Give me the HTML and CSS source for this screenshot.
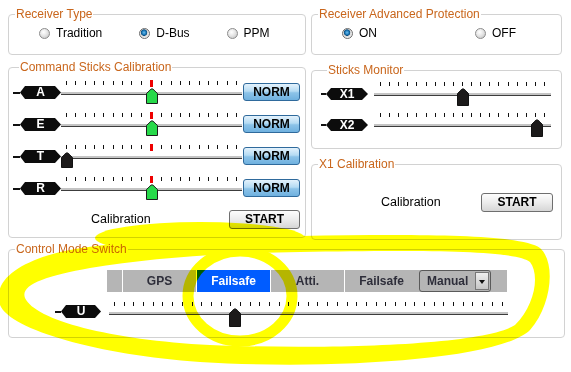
FILE: index.html
```html
<!DOCTYPE html>
<html lang="en">
<head>
  <meta charset="UTF-8">
  <title>Receiver Settings</title>
  <link rel="stylesheet" href="styles.css">
</head>
<body>
<div class="page">
  <div class="row">
    <fieldset class="panel wide top">
      <legend>Receiver Type</legend>
      <div class="radios">
        <label class="radio"><span class="dot"></span>Tradition</label>
        <label class="radio"><span class="dot on"></span>D-Bus</label>
        <label class="radio"><span class="dot"></span>PPM</label>
      </div>
    </fieldset>
    <fieldset class="panel narrow top">
      <legend>Receiver Advanced Protection</legend>
      <div class="radios">
        <label class="radio gap-on"><span class="dot on"></span>ON</label>
        <label class="radio"><span class="dot"></span>OFF</label>
      </div>
    </fieldset>
  </div>

  <div class="row second">
    <fieldset class="panel wide sticks">
      <legend>Command Sticks Calibration</legend>
      <div class="stick">
        <div class="tag"><span class="wire"></span><span class="pill">A</span></div>
        <div class="slider">
          <div class="ticks"><i></i><i></i><i></i><i></i><i></i><i></i><i></i><i></i><i></i><i class="mid"></i><i></i><i></i><i></i><i></i><i></i><i></i><i></i><i></i><i></i></div>
          <div class="track"></div>
          <svg class="thumb" style="left:85px" width="12" height="16" viewBox="0 0 12 16"><path d="M0.5 15.5V5.5L5 1.2Q6 0.5 7 1.2L11.5 5.5V15.5Z" fill="#27d94a" stroke="#1c1c1c"/></svg>
        </div>
        <button class="norm">NORM</button>
      </div>
      <div class="stick">
        <div class="tag"><span class="wire"></span><span class="pill">E</span></div>
        <div class="slider">
          <div class="ticks"><i></i><i></i><i></i><i></i><i></i><i></i><i></i><i></i><i></i><i class="mid"></i><i></i><i></i><i></i><i></i><i></i><i></i><i></i><i></i><i></i></div>
          <div class="track"></div>
          <svg class="thumb" style="left:85px" width="12" height="16" viewBox="0 0 12 16"><path d="M0.5 15.5V5.5L5 1.2Q6 0.5 7 1.2L11.5 5.5V15.5Z" fill="#27d94a" stroke="#1c1c1c"/></svg>
        </div>
        <button class="norm">NORM</button>
      </div>
      <div class="stick">
        <div class="tag"><span class="wire"></span><span class="pill">T</span></div>
        <div class="slider">
          <div class="ticks"><i></i><i></i><i></i><i></i><i></i><i></i><i></i><i></i><i></i><i class="mid"></i><i></i><i></i><i></i><i></i><i></i><i></i><i></i><i></i><i></i></div>
          <div class="track"></div>
          <svg class="thumb" style="left:0px" width="12" height="16" viewBox="0 0 12 16"><path d="M0.5 15.5V5.5L5 1.2Q6 0.5 7 1.2L11.5 5.5V15.5Z" fill="#1c1a1a" stroke="#111"/></svg>
        </div>
        <button class="norm">NORM</button>
      </div>
      <div class="stick">
        <div class="tag"><span class="wire"></span><span class="pill">R</span></div>
        <div class="slider">
          <div class="ticks"><i></i><i></i><i></i><i></i><i></i><i></i><i></i><i></i><i></i><i class="mid"></i><i></i><i></i><i></i><i></i><i></i><i></i><i></i><i></i><i></i></div>
          <div class="track"></div>
          <svg class="thumb" style="left:85px" width="12" height="16" viewBox="0 0 12 16"><path d="M0.5 15.5V5.5L5 1.2Q6 0.5 7 1.2L11.5 5.5V15.5Z" fill="#27d94a" stroke="#1c1c1c"/></svg>
        </div>
        <button class="norm">NORM</button>
      </div>
      <div class="calib">
        <span class="calib-label">Calibration</span>
        <button class="start">START</button>
      </div>
    </fieldset>

    <div class="col">
      <fieldset class="panel narrow monitor">
        <legend>Sticks Monitor</legend>
        <div class="stick mon">
          <div class="tag"><span class="wire"></span><span class="pill">X1</span></div>
          <div class="slider">
            <div class="ticks"><i></i><i></i><i></i><i></i><i></i><i></i><i></i><i></i><i></i><i></i><i></i><i></i><i></i><i></i><i></i><i></i><i></i><i></i><i></i></div>
            <div class="track"></div>
            <svg class="thumb tall" style="left:83px" width="12" height="18" viewBox="0 0 12 18"><path d="M0.5 17.5V5.5L5 1.2Q6 0.5 7 1.2L11.5 5.5V17.5Z" fill="#1c1a1a" stroke="#111"/></svg>
          </div>
        </div>
        <div class="stick mon">
          <div class="tag"><span class="wire"></span><span class="pill">X2</span></div>
          <div class="slider">
            <div class="ticks"><i></i><i></i><i></i><i></i><i></i><i></i><i></i><i></i><i></i><i></i><i></i><i></i><i></i><i></i><i></i><i></i><i></i><i></i><i></i></div>
            <div class="track"></div>
            <svg class="thumb tall" style="left:157px" width="12" height="18" viewBox="0 0 12 18"><path d="M0.5 17.5V5.5L5 1.2Q6 0.5 7 1.2L11.5 5.5V17.5Z" fill="#1c1a1a" stroke="#111"/></svg>
          </div>
        </div>
      </fieldset>
      <fieldset class="panel narrow x1cal">
        <legend>X1 Calibration</legend>
        <div class="calib">
          <span class="calib-label">Calibration</span>
          <button class="start">START</button>
        </div>
      </fieldset>
    </div>
  </div>

  <fieldset class="panel mode">
    <legend>Control Mode Switch</legend>
    <div class="modes">
      <span class="seg pad"></span>
      <span class="seg">GPS</span>
      <span class="seg active">Failsafe</span>
      <span class="seg">Atti.</span>
      <span class="seg">Failsafe</span>
      <span class="select">Manual<span class="arrow"></span></span>
    </div>
    <div class="stick uline">
      <div class="tag"><span class="wire"></span><span class="pill">U</span></div>
      <div class="slider">
        <div class="ticks"><i></i><i></i><i></i><i></i><i></i><i></i><i></i><i></i><i></i><i></i><i></i><i></i><i></i><i></i><i></i><i></i><i></i><i></i><i></i><i></i><i></i><i></i><i></i><i></i><i></i><i></i><i></i><i></i><i></i><i></i><i></i><i></i><i></i><i></i><i></i><i></i><i></i><i></i><i></i><i></i><i></i></div>
        <div class="track"></div>
        <svg class="thumb tall" style="left:120px" width="12" height="19" viewBox="0 0 12 19"><path d="M0.5 18.5V5.5L5 1.2Q6 0.5 7 1.2L11.5 5.5V18.5Z" fill="#1c1a1a" stroke="#111"/></svg>
      </div>
    </div>
  </fieldset>

  <!-- highlighter marks drawn over the screen -->
  <svg class="marker" width="571" height="372" viewBox="0 0 571 372">
    <path fill-rule="evenodd" fill="#ffff00" d="M300 236C420 234 520 234 540 248C556 262 552 305 530 330C500 360 330 370 200 362C100 355 10 330 0 305C-8 280 20 262 60 252C120 240 200 237 300 236Z M300 252C420 250 515 250 530 262C540 275 535 305 515 325C485 345 330 350 210 345C110 340 35 320 25 298C20 285 45 276 90 268C150 258 220 253 300 252Z"/>
    <ellipse cx="200" cy="238" rx="105" ry="16" fill="#ffff00"/>
    <ellipse cx="240" cy="296" rx="52" ry="45" fill="none" stroke="#ffff00" stroke-width="11"/>
  </svg>
</div>
</body>
</html>
```

FILE: styles.css
```css
body {
  margin: 0;
  background: #fff;
  font-family: "Liberation Sans", Arial, sans-serif;
  font-size: 12px;
  color: #000;
}

.page {
  position: relative;
  width: 571px;
  height: 372px;
  padding: 7px 0 0 8px;
  box-sizing: border-box;
  overflow: hidden;
}

.row {
  display: flex;
  gap: 5px;
}

.row.second {
  margin-top: 5px;
}

.col {
  display: flex;
  flex-direction: column;
}

.panel {
  margin: 0;
  padding: 0;
  min-width: 0;
  box-sizing: border-box;
  border: 1px solid #d2d2d2;
  border-radius: 4px;
}

.panel legend {
  margin-left: 6px;
  padding: 0 1px;
  font-size: 12px;
  line-height: 14px;
  color: #c9661c;
}

.wide { width: 298px; }
.narrow { width: 251px; }

.top { height: 48px; }

.radios {
  display: flex;
  padding: 5px 0 0 30px;
  line-height: 14px;
  white-space: nowrap;
}

.radio {
  display: flex;
  flex-shrink: 0;
  align-items: center;
  gap: 6px;
  margin-right: 37px;
}

.radio.gap-on { margin-right: 98px; }

.dot {
  width: 11px;
  height: 11px;
  box-sizing: border-box;
  border-radius: 50%;
  border: 1px solid #8c8c8c;
  background: radial-gradient(circle at 40% 35%, #fff 0, #e6e6e6 45%, #bdbdbd 100%);
}

.dot.on {
  border-color: #6d6d6d;
  background: radial-gradient(circle at 45% 40%, #6fc0f0 0, #1a78b8 28%, #0d4f80 40%, #d8d8d8 48%, #f4f4f4 75%, #c0c0c0 100%);
}

/* sticks */
.sticks {
  height: 178px;
  padding: 2px 0 0 4px;
}

.stick {
  display: flex;
  align-items: flex-start;
  height: 32px;
}

.tag {
  display: flex;
  align-items: center;
  margin-top: 10px;
}

.wire {
  width: 7px;
  height: 2px;
  background: #111;
}

.pill {
  width: 41px;
  height: 13px;
  line-height: 13px;
  background: #0c0c0c;
  color: #fff;
  font-weight: bold;
  font-size: 12px;
  text-align: center;
  clip-path: polygon(5px 0, calc(100% - 6px) 0, 100% 50%, calc(100% - 6px) 100%, 5px 100%, 0 50%);
}

.slider {
  position: relative;
  width: 181px;
  height: 32px;
  padding-top: 5px;
  box-sizing: border-box;
}

.ticks {
  display: flex;
  justify-content: space-between;
  align-items: flex-start;
  height: 4px;
  margin: 0 5px;
}

.ticks i {
  width: 1px;
  height: 4px;
  background: #111;
}

.ticks i.mid {
  width: 3px;
  height: 7px;
  margin-top: -1px;
  background: #ee0000;
}

.track {
  height: 3px;
  margin-top: 7px;
  background: linear-gradient(#c4c4c4 0, #c4c4c4 2px, #3c3c3c 2px);
}

.thumb {
  position: absolute;
  top: 12px;
}

.thumb.tall { top: 11px; }

button {
  font-family: "Liberation Sans", Arial, sans-serif;
  font-size: 12px;
  font-weight: bold;
  color: #000;
  padding: 0;
  cursor: pointer;
}

.norm {
  width: 57px;
  height: 18px;
  margin: 7px 0 0 1px;
  border: 1px solid #2f6a9c;
  border-radius: 3px;
  background: linear-gradient(#e4f2fc, #b5dbf3 45%, #8cc3e8 55%, #6fb1df);
}

.calib {
  display: flex;
  align-items: center;
  height: 30px;
  padding: 0 5px 0 78px;
}

.calib-label {
  font-size: 12.5px;
}

.start {
  margin-left: auto;
  width: 71px;
  height: 19px;
  border: 1px solid #6f6f6f;
  border-radius: 3px;
  background: linear-gradient(#fdfdfd, #ececec 50%, #d6d6d6);
}

/* right column */
.monitor {
  height: 86px;
  margin-top: 3px;
  padding: 0 0 0 9px;
}

.mon {
  height: 31px;
}

.mon .tag { margin-top: 11px; }

.mon .pill { width: 42px; height: 12px; line-height: 12px; }

.mon .wire { width: 5px; }

.mon .slider {
  width: 177px;
  margin-left: 6px;
}

.mon .ticks { margin: 0 6px; }

.x1cal {
  height: 83px;
  margin-top: 8px;
  padding-top: 21px;
}

.x1cal .calib {
  height: 20px;
  padding: 0 8px 0 69px;
}

.x1cal .start { width: 72px; }

/* control mode switch */
.mode {
  width: 557px;
  height: 96px;
  margin-top: 2px;
  padding: 14px 0 0 0;
}

.modes {
  display: flex;
  width: 400px;
  height: 22px;
  margin-left: 98px;
  background: #b5b5b5;
  line-height: 22px;
  font-weight: bold;
  color: #2e2e3a;
}

.seg {
  width: 73px;
  border-left: 1px solid #fff;
  text-align: center;
}

.seg.pad {
  width: 15px;
  border-left: 0;
}

.seg.active {
  background: #005cff;
  color: #fff;
}

.select {
  display: flex;
  justify-content: space-between;
  width: 72px;
  height: 22px;
  margin-left: 1px;
  padding-left: 7px;
  box-sizing: border-box;
  border: 1px solid #5a5a5a;
  border-radius: 3px;
  line-height: 20px;
}

.arrow {
  position: relative;
  width: 14px;
  height: 18px;
  margin: 1px;
  box-sizing: border-box;
  border: 1px solid #777;
  background: linear-gradient(#eee, #c6c6c6);
}

.arrow::after {
  content: "";
  position: absolute;
  left: 3px;
  top: 7px;
  border-left: 3px solid transparent;
  border-right: 3px solid transparent;
  border-top: 4px solid #111;
}

.uline {
  height: 30px;
  margin-top: 5px;
  padding-left: 46px;
}

.uline .tag { margin-top: 8px; }

.uline .wire { width: 6px; }

.uline .pill { width: 40px; }

.uline .slider {
  width: 399px;
  margin-left: 8px;
}

.uline .ticks { margin: 0 5px 0 5px; }

.uline .track { margin-top: 6px; }

.uline .thumb { top: 11px; }

.marker {
  position: absolute;
  left: 0;
  top: 0;
  pointer-events: none;
  mix-blend-mode: multiply;
}
```
